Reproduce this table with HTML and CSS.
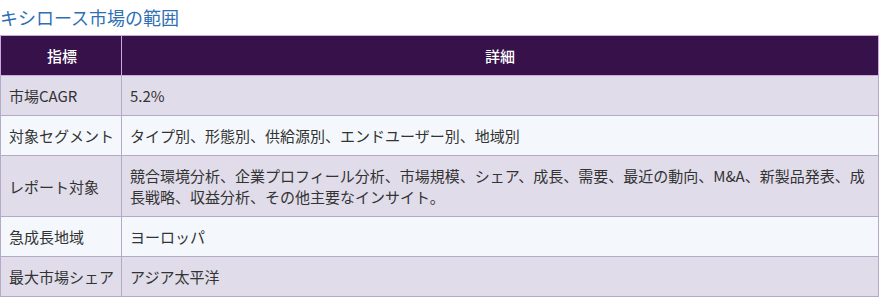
FILE: index.html
```html
<!DOCTYPE html>
<html lang="ja">
<head>
<meta charset="utf-8">
<link rel="stylesheet" href="styles.css">
</head>
<body>
<h3 class="title">キシロース市場の範囲</h3>
<table class="scope">
  <thead>
    <tr><th class="col-key">指標</th><th>詳細</th></tr>
  </thead>
  <tbody>
    <tr><td class="key">市場CAGR</td><td>5.2%</td></tr>
    <tr><td class="key">対象セグメント</td><td>タイプ別、形態別、供給源別、エンドユーザー別、地域別</td></tr>
    <tr><td class="key">レポート対象</td><td>競合環境分析、企業プロフィール分析、市場規模、シェア、成長、需要、最近の動向、M&amp;A、新製品発表、成長戦略、収益分析、その他主要なインサイト。</td></tr>
    <tr><td class="key">急成長地域</td><td>ヨーロッパ</td></tr>
    <tr><td class="key">最大市場シェア</td><td>アジア太平洋</td></tr>
  </tbody>
</table>
</body>
</html>
```
FILE: styles.css
```css
html, body {
  margin: 0;
  padding: 0;
  background: #ffffff;
}
body {
  font-family: "Noto Sans CJK JP", "Noto Sans", sans-serif;
  color: #333333;
}
.title {
  margin: 0;
  padding: 5px 0 0 0;
  height: 35px;
  box-sizing: border-box;
  font-size: 18px;
  line-height: 24px;
  font-weight: 400;
  color: #2f6fb3;
}
.scope {
  width: 879px;
  table-layout: fixed;
  border-collapse: collapse;
  font-size: 15px;
  line-height: 21px;
}
.scope th {
  background: #36114a;
  color: #ffffff;
  font-weight: 500;
  text-align: center;
  padding: 9px 8px;
  border: 1px solid #c9a9df;
  height: 21px;
}
.scope td {
  padding: 9px 8px;
  border: 1px solid #b3abc6;
  vertical-align: middle;
  text-align: left;
}
.scope .col-key {
  width: 106px;
  padding-right: 6px;
}
.scope .key {
  padding-right: 4px;
  white-space: nowrap;
}
.scope tbody tr:nth-child(odd) td {
  background: #e0dcea;
}
.scope tbody tr:nth-child(even) td {
  background: #f4f8fc;
}
```
